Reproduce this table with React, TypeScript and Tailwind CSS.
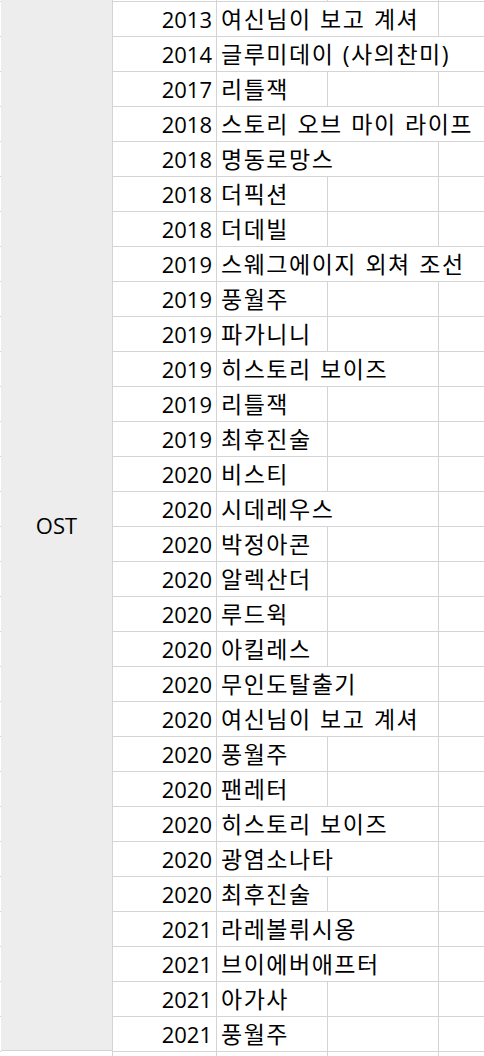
const rows: { year: number; title: string; span: 1 | 2 | 3 }[] = [
  { year: 2013, title: "여신님이 보고 계셔", span: 2 },
  { year: 2014, title: "글루미데이 (사의찬미)", span: 3 },
  { year: 2017, title: "리틀잭", span: 1 },
  { year: 2018, title: "스토리 오브 마이 라이프", span: 3 },
  { year: 2018, title: "명동로망스", span: 2 },
  { year: 2018, title: "더픽션", span: 1 },
  { year: 2018, title: "더데빌", span: 1 },
  { year: 2019, title: "스웨그에이지 외쳐 조선", span: 3 },
  { year: 2019, title: "풍월주", span: 1 },
  { year: 2019, title: "파가니니", span: 1 },
  { year: 2019, title: "히스토리 보이즈", span: 2 },
  { year: 2019, title: "리틀잭", span: 1 },
  { year: 2019, title: "최후진술", span: 1 },
  { year: 2020, title: "비스티", span: 1 },
  { year: 2020, title: "시데레우스", span: 2 },
  { year: 2020, title: "박정아콘", span: 1 },
  { year: 2020, title: "알렉산더", span: 1 },
  { year: 2020, title: "루드윅", span: 1 },
  { year: 2020, title: "아킬레스", span: 1 },
  { year: 2020, title: "무인도탈출기", span: 2 },
  { year: 2020, title: "여신님이 보고 계셔", span: 2 },
  { year: 2020, title: "풍월주", span: 1 },
  { year: 2020, title: "팬레터", span: 1 },
  { year: 2020, title: "히스토리 보이즈", span: 2 },
  { year: 2020, title: "광염소나타", span: 2 },
  { year: 2020, title: "최후진술", span: 1 },
  { year: 2021, title: "라레볼뤼시옹", span: 2 },
  { year: 2021, title: "브이에버애프터", span: 2 },
  { year: 2021, title: "아가사", span: 1 },
  { year: 2021, title: "풍월주", span: 1 },
];

const title = "whitespace-nowrap pl-[4px] text-[23px] tracking-[1.5px] [word-spacing:1px]";

// empty row of cells, used for the cut-off rows at the top and bottom
function EmptyRow({ className }: { className: string }) {
  return (
    <div className={`flex ${className}`}>
      <div className="w-[104px] shrink-0 border-r border-[#d4d4d4]" />
      <div className="w-[111px] shrink-0 border-r border-[#d4d4d4]" />
      <div className="w-[111px] shrink-0 border-r border-[#d4d4d4]" />
      <div className="flex-1" />
    </div>
  );
}

function Row({ year, text, span }: { year: number; text: string; span: 1 | 2 | 3 }) {
  return (
    <div className="flex h-[35px] border-b border-[#d4d4d4]">
      <div className="w-[104px] shrink-0 border-r border-[#d4d4d4] pr-[4px] text-right">
        {year}
      </div>
      {span === 1 && (
        <>
          <div className={`w-[111px] shrink-0 border-r border-[#d4d4d4] ${title}`}>{text}</div>
          <div className="w-[111px] shrink-0 border-r border-[#d4d4d4]" />
          <div className="flex-1" />
        </>
      )}
      {span === 2 && (
        <>
          <div className={`w-[222px] shrink-0 border-r border-[#d4d4d4] ${title}`}>{text}</div>
          <div className="flex-1" />
        </>
      )}
      {span === 3 && <div className={`min-w-0 flex-1 overflow-hidden ${title}`}>{text}</div>}
    </div>
  );
}

export default function App() {
  return (
    <div
      className="flex h-[1056px] w-[484px] overflow-hidden bg-white text-[22px] leading-[34px] text-black"
      style={{ fontFamily: '"Open Sans", "Noto Sans CJK KR", sans-serif' }}
    >
      {/* last pixel of the column to the left */}
      <div className="flex w-px shrink-0 flex-col">
        <div className="h-px" />
        <div className="h-px bg-[#d4d4d4]" />
        {rows.map((_, i) => (
          <div key={i} className="h-[35px] border-b border-[#d4d4d4]" />
        ))}
      </div>

      {/* merged category cell */}
      <div className="flex w-[112px] shrink-0 flex-col border-r border-[#d4d4d4]">
        <div className="flex h-[1051px] items-center justify-center border-b border-[#d4d4d4] bg-[#ededed]">
          OST
        </div>
      </div>

      <div className="flex min-w-0 flex-1 flex-col">
        <EmptyRow className="h-px" />
        <div className="h-px bg-[#d4d4d4]" />
        {rows.map((r, i) => (
          <Row key={i} year={r.year} text={r.title} span={r.span} />
        ))}
        <EmptyRow className="flex-1" />
      </div>
    </div>
  );
}
